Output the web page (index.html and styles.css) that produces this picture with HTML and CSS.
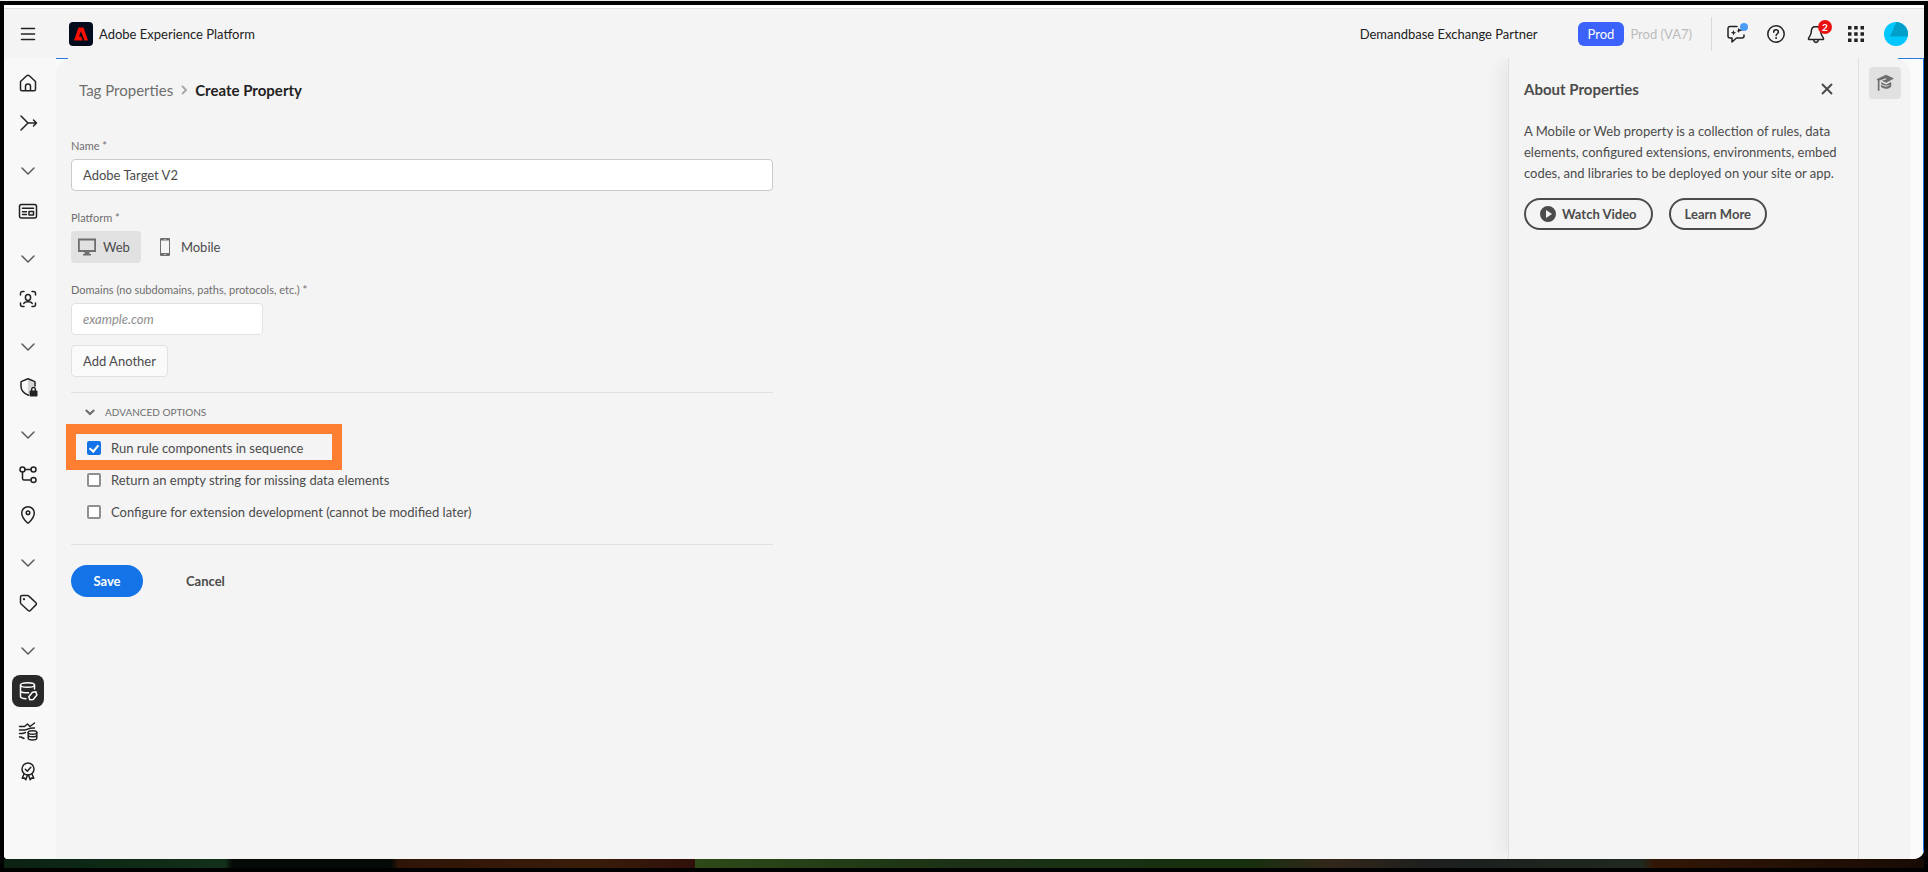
FILE: index.html
```html
<!DOCTYPE html>
<html lang="en">
<head>
  <meta charset="UTF-8">
  <title>Create Property | Adobe Experience Platform</title>
  <link rel="stylesheet" href="styles.css">
</head>
<body>
  <svg class="sprite" aria-hidden="true">
    <symbol id="chevron-down" viewBox="0 0 20 20">
      <path d="M4 7l6 6 6-6"/>
    </symbol>
  </svg>

  <div class="window">
    <header class="topbar">
      <button class="menu-btn" aria-label="Menu">
        <svg class="icon" viewBox="0 0 20 20"><path d="M3.5 4.5h13M3.5 10h13M3.5 15.5h13"/></svg>
      </button>
      <a class="brand" href="#">
        <svg class="logo" viewBox="0 0 24 24" aria-hidden="true">
          <rect width="24" height="24" rx="4" fill="#000b1d"/>
          <path d="M9.5 5.5h5L19 18.5h-3.6L12 9.2l-2 5.3h2.3l1.3 4H5z" fill="#fa0f00"/>
        </svg>
        <span>Adobe Experience Platform</span>
      </a>
      <span class="org">Demandbase Exchange Partner</span>
      <span class="sandbox">Prod</span>
      <span class="region">Prod (VA7)</span>
      <div class="top-actions">
        <button class="top-btn" aria-label="Feedback">
          <svg class="icon" viewBox="0 0 20 20">
            <path d="M11 2.5H4a2 2 0 0 0-2 2V12a2 2 0 0 0 2 2h2v4l4.500-4H16a2 2 0 0 0 2-2v-1"/>
            <path class="solid" d="M7.5 6l.8 1.900 1.900.8-1.900.8-.8 1.900-.8-1.900-1.900-.8 1.900-.8zM12.500 3.500l.6 1.500 1.500.6 3 .4-3 1-1.500.6-.6 1.500-.6-1.500-1.500-.6 1.500-.6z"/>
          </svg>
          <span class="dot"></span>
        </button>
        <button class="top-btn" aria-label="Help">
          <svg class="icon" viewBox="0 0 20 20">
            <circle cx="10" cy="10" r="8.2"/>
            <path d="M7.700 8.200c0-3.200 4.700-3 4.700-.2 0 1.700-2.300 1.800-2.300 3.600"/>
            <circle class="solid" cx="10.100" cy="14" r="1"/>
          </svg>
        </button>
        <button class="top-btn" aria-label="Notifications">
          <svg class="icon" viewBox="0 0 20 20">
            <path d="M10 2.500C6.800 2.500 5.300 4.800 5.300 7.500c0 4-2.500 5.500-2.800 7-.1.600.3 1 .9 1h13.200c.6 0 1-.4.9-1-.3-1.500-2.800-3-2.800-7 0-2.700-1.500-5-4.700-5z"/>
            <path d="M7.800 16.500c.5 2.500 3.900 2.500 4.400 0"/>
          </svg>
          <span class="count">2</span>
        </button>
        <button class="top-btn" aria-label="Apps">
          <svg class="icon grid" viewBox="0 0 20 20">
            <path d="M2 2h3.500v3.500H2zM8.200 2h3.500v3.500H8.200zM14.500 2H18v3.500h-3.500zM2 8.200h3.500v3.500H2zM8.200 8.200h3.500v3.500H8.200zM14.500 8.200H18v3.500h-3.500zM2 14.500h3.500V18H2zM8.200 14.500h3.500V18H8.200zM14.500 14.500H18V18h-3.500z"/>
          </svg>
        </button>
        <button class="top-btn" aria-label="Account">
          <svg class="avatar" viewBox="0 0 24 24">
            <circle cx="12" cy="12" r="12" fill="#00c8ff"/>
            <path d="M12.500.1A12 12 0 0 1 23.800 14.500H6z" fill="#009fc9"/>
          </svg>
        </button>
      </div>
    </header>

    <div class="shell">
      <nav class="sidebar">
        <a class="nav-item" href="#" aria-label="Home">
          <svg class="icon" viewBox="0 0 20 20"><path d="M2.500 8.500L8.700 2.800a2 2 0 0 1 2.600 0l6.200 5.700v7.800a1.500 1.500 0 0 1-1.500 1.500H4a1.500 1.500 0 0 1-1.500-1.500zM7.500 17.500v-4.300c0-3 5-3 5 0v4.300"/></svg>
        </a>
        <a class="nav-item" href="#" aria-label="Workflows">
          <svg class="icon" viewBox="0 0 20 20"><path d="M3 3l7 7-7 7M10 10h8.500M15.500 7l3 3-3 3"/></svg>
        </a>
        <button class="nav-group" aria-label="Expand group"><svg class="icon chevron"><use href="#chevron-down"/></svg></button>
        <a class="nav-item" href="#" aria-label="Dashboards">
          <svg class="icon" viewBox="0 0 20 20"><rect x="1.500" y="3.500" width="17" height="13.500" rx="2"/><path d="M4.500 7.200h11M4.500 10.800h4M4.500 13.500h4M11 10.500h4.500v3.500H11z"/></svg>
        </a>
        <button class="nav-group" aria-label="Expand group"><svg class="icon chevron"><use href="#chevron-down"/></svg></button>
        <a class="nav-item" href="#" aria-label="Profiles">
          <svg class="icon" viewBox="0 0 20 20"><path d="M2.500 6V4.500a2 2 0 0 1 2-2H6M14 2.500h1.500a2 2 0 0 1 2 2V6M17.500 14v1.500a2 2 0 0 1-2 2H14M6 17.500H4.500a2 2 0 0 1-2-2V14M5.800 14.500c1-2.200 7.400-2.200 8.400 0"/><ellipse cx="10" cy="8.500" rx="2.600" ry="3"/></svg>
        </a>
        <button class="nav-group" aria-label="Expand group"><svg class="icon chevron"><use href="#chevron-down"/></svg></button>
        <a class="nav-item" href="#" aria-label="Privacy">
          <svg class="icon" viewBox="0 0 20 20">
            <path class="shade" d="M10 2l6.500 2.500v6H13v6.500h-3z"/>
            <path d="M10.500 18.300C5 16 3 13 3 9.500V5.300a1 1 0 0 1 .6-.9L9.400 2a1.500 1.500 0 0 1 1.200 0l5.800 2.400a1 1 0 0 1 .6.900v3.700"/>
            <path class="solid" d="M12.500 13.500h.5v-1.200a2.500 2.500 0 0 1 5 0v1.200h.8c.4 0 .7.300.7.700v4.600c0 .4-.3.700-.7.700h-6.500c-.4 0-.7-.3-.7-.7v-4.600c0-.4.300-.7.900-.7zm1.900 0h2.200v-1.100c0-1.500-2.200-1.500-2.200 0z"/>
          </svg>
        </a>
        <button class="nav-group" aria-label="Expand group"><svg class="icon chevron"><use href="#chevron-down"/></svg></button>
        <a class="nav-item" href="#" aria-label="Journeys">
          <svg class="icon" viewBox="0 0 20 20"><circle cx="4.500" cy="4.500" r="2.500"/><circle cx="15.500" cy="4.500" r="2.500"/><circle cx="15.500" cy="15" r="2.500"/><path d="M7 4.500h6M4.500 7v6.500A1.500 1.500 0 0 0 6 15h7"/></svg>
        </a>
        <a class="nav-item" href="#" aria-label="Places">
          <svg class="icon" viewBox="0 0 20 20"><path d="M10 1.800c3.700 0 6.300 2.800 6.300 6.200 0 4-4.300 8.500-5.600 9.700a1 1 0 0 1-1.400 0C8 16.500 3.700 12 3.700 8c0-3.400 2.600-6.200 6.300-6.200z"/><circle cx="10" cy="7.800" r="1.800"/></svg>
        </a>
        <button class="nav-group" aria-label="Expand group"><svg class="icon chevron"><use href="#chevron-down"/></svg></button>
        <a class="nav-item" href="#" aria-label="Tags">
          <svg class="icon" viewBox="0 0 20 20"><path d="M2.500 4a1.500 1.500 0 0 1 1.500-1.500h5.500a2 2 0 0 1 1.400.6l7 6.600a1.500 1.500 0 0 1 0 2.200l-5.500 5.600a1.500 1.500 0 0 1-2.200 0L3.100 11a2 2 0 0 1-.6-1.400z"/><circle class="solid" cx="6" cy="6.200" r="1.100"/></svg>
        </a>
        <button class="nav-group" aria-label="Expand group"><svg class="icon chevron"><use href="#chevron-down"/></svg></button>
        <a class="nav-item active" href="#" aria-label="Data collection">
          <svg class="icon" viewBox="0 0 20 20"><ellipse cx="9.500" cy="4" rx="7" ry="2.300"/><path d="M2.500 4v11.500c0 1.300 2.500 2.100 5.500 2.200M16.500 4v4M2.500 9.800c0 1.500 4 2.300 8 2M10.800 15.800l3.700-4.600 3.400-.4 1 3.200-3.700 4.500-3.400.2z"/></svg>
        </a>
        <a class="nav-item" href="#" aria-label="Sources">
          <svg class="icon" viewBox="0 0 20 20"><path d="M1.500 5.500h5l3-2.500 2.500 2.500L16.500 2M1.500 9h5c3 0 4-2.500 10-2M1.500 12.500h3l3-1M1.500 16h1.500l3 1.500"/><ellipse cx="14.500" cy="11.500" rx="4.300" ry="1.700"/><path d="M10.200 11.500v5.800c0 2.200 8.600 2.200 8.600 0v-5.800M10.200 14.300c0 2 8.600 2 8.600 0"/></svg>
        </a>
        <a class="nav-item" href="#" aria-label="Certifications">
          <svg class="icon" viewBox="0 0 20 20"><circle cx="10" cy="8" r="6"/><path d="M7.300 8.200l2 2 3.500-4M6 13l-1.800 4.300 2.300-.3 1.300 1.800L9.500 14M14 13l1.800 4.300-2.300-.3-1.300 1.800L10.500 14"/></svg>
        </a>
      </nav>

      <main class="page">
        <section class="content">
          <nav class="breadcrumbs" aria-label="Breadcrumb">
            <a href="#">Tag Properties</a>
            <svg class="crumb-sep" viewBox="0 0 6 10"><path d="M1 1l4 4-4 4"/></svg>
            <h1>Create Property</h1>
          </nav>

          <form class="property-form">
            <div class="field">
              <label for="name">Name *</label>
              <input class="textfield filled" type="text" id="name" value="Adobe Target V2">
            </div>

            <div class="field">
              <span class="field-label" id="platform-label">Platform *</span>
              <div class="platforms" role="group" aria-labelledby="platform-label">
                <button type="button" class="platform selected" aria-pressed="true">
                  <svg viewBox="0 0 18 18"><path fill-rule="evenodd" d="M0 .5h18V14h-6.500v2H13v1.500H5V16h1.500v-2H0zM1.800 2.500v9.500h14.400V2.500z"/></svg>
                  Web
                </button>
                <button type="button" class="platform" aria-pressed="false">
                  <svg viewBox="0 0 18 18"><path fill-rule="evenodd" d="M5 0h8a1 1 0 0 1 1 1v16a1 1 0 0 1-1 1H5a1 1 0 0 1-1-1V1a1 1 0 0 1 1-1zM5 2.500v12.500h8V2.500zM8 1v.6h2V1zM8.300 16v1h1.400v-1z"/></svg>
                  Mobile
                </button>
              </div>
            </div>

            <div class="field">
              <label for="domain">Domains (no subdomains, paths, protocols, etc.) *</label>
              <input class="textfield short" type="text" id="domain" placeholder="example.com">
              <button type="button" class="add-btn">Add Another</button>
            </div>

            <div class="advanced">
              <button type="button" class="advanced-toggle" aria-expanded="true">
                <svg class="chevron-small"><use href="#chevron-down"/></svg>
                ADVANCED OPTIONS
              </button>
              <div class="option highlighted">
                <input type="checkbox" id="sequence" checked>
                <label for="sequence">Run rule components in sequence</label>
              </div>
              <div class="option">
                <input type="checkbox" id="empty-string">
                <label for="empty-string">Return an empty string for missing data elements</label>
              </div>
              <div class="option">
                <input type="checkbox" id="extension-dev">
                <label for="extension-dev">Configure for extension development (cannot be modified later)</label>
              </div>
            </div>

            <div class="form-actions">
              <button type="submit" class="save-btn">Save</button>
              <button type="button" class="cancel-btn">Cancel</button>
            </div>
          </form>
        </section>

        <aside class="about">
          <div class="about-head">
            <h2>About Properties</h2>
            <button class="close-btn" aria-label="Close">
              <svg viewBox="0 0 12 12"><path d="M1 1l10 10M11 1L1 11"/></svg>
            </button>
          </div>
          <p>A Mobile or Web property is a collection of rules, data elements, configured extensions, environments, embed codes, and libraries to be deployed on your site or app.</p>
          <div class="about-actions">
            <button class="outline-btn">
              <svg viewBox="0 0 16 16"><path fill-rule="evenodd" d="M8 0a8 8 0 1 1 0 16A8 8 0 0 1 8 0zM6 4v8l6-4z"/></svg>
              Watch Video
            </button>
            <button class="outline-btn">Learn More</button>
          </div>
        </aside>

        <div class="rail">
          <button class="rail-btn" aria-label="Learning">
            <svg viewBox="0 0 18 18"><path d="M10 .8l8 3.700-7.700 4.300-4.500-2 4.700-1.600-.5-.9-6.500 2.300v10.200H1.800V6.200L.5 5.300zM5 8.200l5.200 2.400 5-2.600v4.500c-2.200 3-7.800 3-10.200.3v-2.300c2.500 2.500 6.500 2.700 9 .5-3 1-6.500.8-9-1.600z"/></svg>
          </button>
        </div>
      </main>
    </div>
  </div>
  <div class="wallpaper"></div>
</body>
</html>
```
FILE: styles.css
```css
*,
*::before,
*::after {
  box-sizing: border-box;
}
body {
  margin: 0;
  min-height: 100vh;
  display: flex;
  flex-direction: column;
  padding: 4px;
  border-top: 1px solid #e8e8e8;
  background: #000;
  color: #4b4b4b;
  font-family: Lato, "Liberation Sans", sans-serif;
  font-size: 13px;
  line-height: 20px;
}
button,
input {
  font: inherit;
  color: inherit;
}
button {
  display: flex;
  align-items: center;
  justify-content: center;
  padding: 0;
  border: none;
  background: none;
  cursor: pointer;
}
a {
  color: inherit;
  text-decoration: none;
}
h1,
h2,
p {
  margin: 0;
}
.sprite {
  display: none;
}
.icon {
  width: 20px;
  height: 20px;
  fill: none;
  stroke: #222;
  stroke-width: 1.5;
  stroke-linecap: round;
  stroke-linejoin: round;
}
.icon .solid {
  fill: #222;
  stroke: none;
}
.icon .shade {
  fill: #d5d5d5;
  stroke: none;
}

.window {
  flex: 1;
  display: flex;
  flex-direction: column;
  overflow: hidden;
  border-top: 3px solid #fff;
  border-radius: 0 0 10px 4px;
  background: #f8f8f8;
}
.wallpaper {
  height: 9px;
  background: linear-gradient(90deg, #0b2213 0, #12301a 32%, #050a06 33%, #050a06 56%, #2e1508 57%, #3a1c0a 85%, #30100a 100%) left / 36% 100% no-repeat,
    linear-gradient(90deg, #2d4a18 0, #1b3015 22%, #17300f 45%, #33261a 52%, #1c1f1d 60%, #202820 77%, #321707 78%, #180b04 100%) right / 64% 100% no-repeat;
}

/* top bar */
.topbar {
  display: flex;
  align-items: center;
  height: 50px;
  padding: 0 16px 0 14px;
  border-top: 1px solid #dedede;
  background: #f4f4f4;
  color: #222;
}
.brand {
  display: flex;
  align-items: center;
  gap: 6px;
  margin-left: 31px;
}
.logo {
  width: 24px;
  height: 24px;
}
.org {
  margin-left: auto;
}
.sandbox {
  margin-left: 40px;
  padding: 2px 10px;
  border-radius: 6px;
  background: #3b63fb;
  color: #fff;
}
.region {
  margin-left: 6px;
  color: #bcbcbc;
}
.top-actions {
  display: flex;
  align-items: center;
  gap: 16px;
  height: 34px;
  margin-left: 19px;
  padding-left: 12px;
  border-left: 1px solid #dadada;
}
.top-btn {
  position: relative;
  width: 24px;
  height: 24px;
}
.grid {
  fill: #222;
  stroke: none;
}
.avatar {
  width: 24px;
  height: 24px;
}
.dot {
  position: absolute;
  top: 1px;
  right: 0;
  width: 8px;
  height: 8px;
  border-radius: 50%;
  background: #4b9cf5;
}
.count {
  position: absolute;
  top: -2px;
  right: -4px;
  width: 14px;
  height: 14px;
  border-radius: 50%;
  background: #eb1010;
  color: #fff;
  font-size: 10px;
  font-weight: bold;
  line-height: 14px;
  text-align: center;
}

/* sidebar */
.shell {
  flex: 1;
  display: flex;
}
.sidebar {
  display: flex;
  flex-direction: column;
  width: 52px;
  padding-top: 5px;
  background: #f8f8f8;
}
.nav-item {
  display: flex;
  align-items: center;
  justify-content: center;
  width: 32px;
  height: 32px;
  margin: 4px 8px;
  border-radius: 8px;
}
.nav-item.active {
  background: #292929;
}
.nav-item.active .icon {
  stroke: #fff;
}
.nav-group {
  width: 48px;
  height: 48px;
  padding-top: 8px;
}
.chevron {
  stroke: #5a5a5a;
}

/* page */
.page {
  position: relative;
  flex: 1;
  display: flex;
  padding-right: 13px;
  border-right: 1px solid #1473e6;
  background: #fafafa;
}
/* focus outline showing at both ends of the page area */
.page::before,
.page::after {
  content: "";
  position: absolute;
  top: 0;
  height: 1px;
  background: #2c7be0;
}
.page::before {
  left: 0;
  width: 12px;
}
.page::after {
  right: 0;
  width: 25px;
}
.content {
  flex: 1;
  padding: 20px 15px;
  border-radius: 16px 0 0 0;
  background: #f4f4f4;
}
.breadcrumbs {
  display: flex;
  align-items: center;
  gap: 8px;
  padding-left: 8px;
  margin-bottom: 36px;
  font-size: 15px;
  line-height: 24px;
  color: #6e6e6e;
}
.breadcrumbs h1 {
  font-size: 15px;
  color: #222;
}
.crumb-sep {
  width: 6px;
  height: 10px;
  fill: none;
  stroke: #aaa;
  stroke-width: 2;
}
.property-form {
  max-width: 702px;
}
.field {
  margin-bottom: 19px;
}
.field label,
.field-label {
  display: block;
  margin-bottom: 5px;
  font-size: 11px;
  line-height: 16px;
  color: #6e6e6e;
}
.textfield {
  display: block;
  width: 100%;
  height: 32px;
  padding: 0 11px;
  border: 1px solid #e1e1e1;
  border-radius: 4px;
  background: #fff;
}
.textfield.filled {
  border-color: #cacaca;
}
.textfield.short {
  width: 192px;
}
.textfield::placeholder {
  color: #8e8e8e;
  font-style: italic;
}
.platforms {
  display: flex;
  gap: 8px;
}
.platform {
  gap: 7px;
  height: 32px;
  padding: 0 11px 0 7px;
  border-radius: 4px;
}
.platform.selected {
  background: #e1e1e1;
}
.platform svg {
  width: 18px;
  height: 18px;
  fill: #6e6e6e;
}
.add-btn {
  height: 32px;
  margin-top: 10px;
  padding: 0 11px;
  border: 1px solid #e1e1e1;
  border-radius: 4px;
  background: #fafafa;
}
.advanced {
  margin-top: -4px;
  padding: 11px 16px 16px;
  border-top: 1px solid #e1e1e1;
  border-bottom: 1px solid #e1e1e1;
}
.advanced-toggle {
  gap: 8px;
  margin: 0 0 12px -4px;
  font-size: 10px;
  line-height: 16px;
  color: #6e6e6e;
}
.chevron-small {
  width: 14px;
  height: 14px;
  fill: none;
  stroke: #6e6e6e;
  stroke-width: 3;
}
.option {
  position: relative;
  display: flex;
  align-items: center;
  gap: 10px;
  height: 32px;
}
.option input {
  appearance: none;
  display: flex;
  justify-content: center;
  width: 14px;
  height: 14px;
  margin: 0;
  border: 2px solid #909090;
  border-radius: 2px;
  background: #fff;
}
.option input:checked {
  border-color: #1473e6;
  background: #1473e6;
}
.option input:checked::after {
  content: "";
  width: 6px;
  height: 9px;
  border: solid #fff;
  border-width: 0 2px 2px 0;
  transform: rotate(40deg);
}
.highlighted::before {
  content: "";
  position: absolute;
  top: -8px;
  left: -21px;
  width: 276px;
  height: 46px;
  border: 10px solid #ff7f32;
  pointer-events: none;
}
.form-actions {
  display: flex;
  gap: 27px;
  margin-top: 20px;
}
.save-btn,
.cancel-btn {
  height: 32px;
  padding: 0 16px;
  border-radius: 16px;
  font-weight: bold;
}
.save-btn {
  width: 72px;
  background: #1473e6;
  color: #fff;
}

/* help panel */
.about {
  z-index: 1;
  width: 351px;
  padding: 19px 15px;
  border-left: 1px solid #e0e0e0;
  border-right: 1px solid #e0e0e0;
  background: #f4f4f4;
  box-shadow: -12px 0 16px -4px rgba(0, 0, 0, 0.05);
  clip-path: inset(0 0 0 -40px);
}
.about-head {
  display: flex;
  align-items: center;
  justify-content: space-between;
  padding-right: 10px;
}
.about h2 {
  font-size: 15px;
  line-height: 24px;
}
.close-btn svg {
  width: 12px;
  height: 12px;
  stroke: #4b4b4b;
  stroke-width: 2;
}
.about p {
  margin: 20px 0 14px;
  line-height: 21px;
}
.about-actions {
  display: flex;
  gap: 16px;
}
.outline-btn {
  gap: 6px;
  height: 32px;
  padding: 0 14px;
  border: 2px solid #4b4b4b;
  border-radius: 16px;
  font-weight: bold;
}
.outline-btn svg {
  width: 16px;
  height: 16px;
  fill: #4b4b4b;
}
.rail {
  width: 51px;
  padding: 9px 10px;
  border-radius: 0 16px 0 0;
  background: #f4f4f4;
}
.rail-btn {
  width: 32px;
  height: 32px;
  border-radius: 4px;
  background: #e1e1e1;
}
.rail-btn svg {
  width: 18px;
  height: 18px;
  fill: #6e6e6e;
}
```
